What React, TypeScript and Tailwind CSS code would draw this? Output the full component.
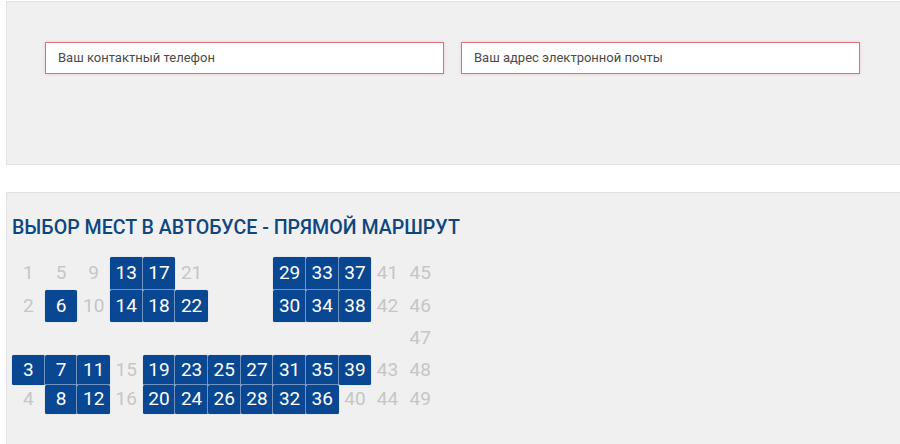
import React from 'react';

type Seat = { n: number; taken: boolean } | null;

const t = (n: number): Seat => ({ n, taken: true });
const f = (n: number): Seat => ({ n, taken: false });
const _ = null;

const rows: { h: string; seats: Seat[] }[] = [
  { h: 'h-[33px]', seats: [f(1), f(5), f(9), t(13), t(17), f(21), _, _, t(29), t(33), t(37), f(41), f(45)] },
  { h: 'h-[32px]', seats: [f(2), t(6), f(10), t(14), t(18), t(22), _, _, t(30), t(34), t(38), f(42), f(46)] },
  { h: 'h-[33px]', seats: [_, _, _, _, _, _, _, _, _, _, _, _, f(47)] },
  { h: 'h-[30px]', seats: [t(3), t(7), t(11), f(15), t(19), t(23), t(25), t(27), t(31), t(35), t(39), f(43), f(48)] },
  { h: 'h-[29px]', seats: [f(4), t(8), t(12), f(16), t(20), t(24), t(26), t(28), t(32), t(36), f(40), f(44), f(49)] },
];

function SeatCell({ seat }: { seat: Seat }) {
  if (!seat) return <div />;
  if (seat.taken) {
    return (
      <div className="flex items-center justify-center bg-[#0a4793] text-white rounded-[1.5px] shadow-[0_0_0_0.5px_#d6e0ee]">
        {seat.n}
      </div>
    );
  }
  return <div className="flex items-center justify-center text-[#c6c6c6]">{seat.n}</div>;
}

function Field({ placeholder }: { placeholder: string }) {
  return (
    <div className="flex h-[32px] w-[399px] items-center border border-[#d9707e] bg-white px-3 text-[13px] text-[#4a4a4a] shadow-[0_0_3px_#f3c6cc]">
      {placeholder}
    </div>
  );
}

export default function App() {
  return (
    <div className="h-[444px] w-[900px] overflow-hidden bg-white" style={{ fontFamily: 'Roboto, "Noto Sans", sans-serif' }}>
      {/* Contacts */}
      <div className="ml-[6px] mt-[1px] h-[164px] border border-r-0 border-[#e2e2e2] bg-[#f0f0f0] pl-[38px] pt-[40px]">
        <div className="flex gap-[17px]">
          <Field placeholder="Ваш контактный телефон" />
          <Field placeholder="Ваш адрес электронной почты" />
        </div>
      </div>

      {/* Seats */}
      <div className="ml-[6px] mt-[27px] h-[260px] border-l border-t border-[#e2e2e2] bg-[#f0f0f0] pl-[5px] pt-[23px]">
        <h2 className="text-[19.6px] font-medium leading-[24px] text-[#0e4680]">
          ВЫБОР МЕСТ В АВТОБУСЕ - ПРЯМОЙ МАРШРУТ
        </h2>
        <div className="mt-[17px] flex flex-col text-[19px]">
          {rows.map((row, i) => (
            <div key={i} className={`grid grid-cols-[repeat(13,32.67px)] ${row.h}`}>
              {row.seats.map((s, j) => (
                <SeatCell key={j} seat={s} />
              ))}
            </div>
          ))}
        </div>
      </div>
    </div>
  );
}
